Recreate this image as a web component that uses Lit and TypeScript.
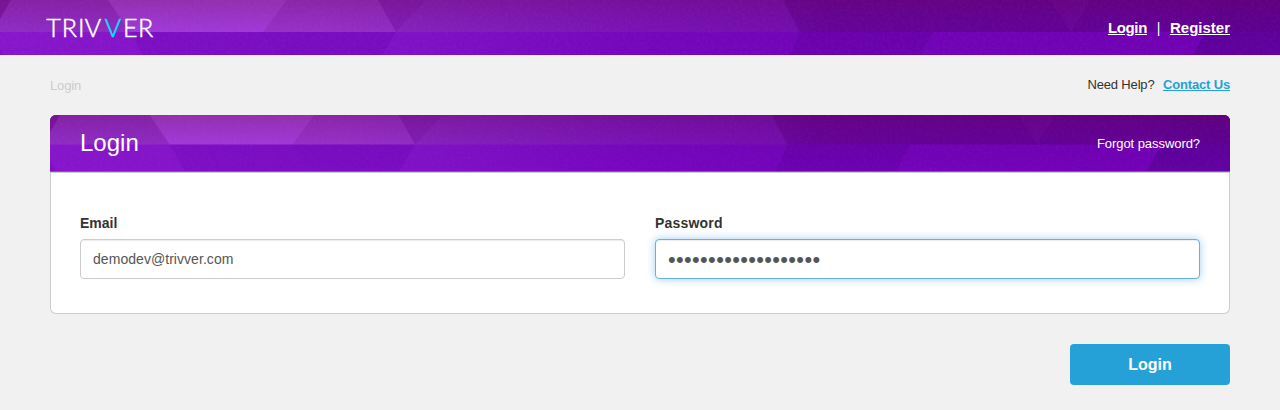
import { LitElement, html, css, svg } from "lit";
import { customElement } from "lit/decorators.js";

@customElement("geo-backdrop")
class GeoBackdrop extends LitElement {
  static styles = css`
    :host { position: absolute; inset: 0; overflow: hidden; display: block; border-radius: inherit; }
    svg { display: block; width: 100%; }
  `;
  render() {
    return html`<svg viewBox="0 0 1280 62" aria-hidden="true">
      <defs>
        <linearGradient id="up"><stop offset="0" stop-color="#8e2cc4"/><stop offset=".25" stop-color="#8c28c0"/><stop offset=".34" stop-color="#8220bc"/><stop offset=".5" stop-color="#7813b6"/><stop offset=".62" stop-color="#720eae"/><stop offset=".65" stop-color="#6e06a8"/><stop offset="1" stop-color="#6600a0"/></linearGradient>
        <linearGradient id="low"><stop offset="0" stop-color="#8917cc"/><stop offset=".32" stop-color="#8012c6"/><stop offset=".5" stop-color="#7606bc"/><stop offset=".62" stop-color="#7204b8"/><stop offset="1" stop-color="#7000b2"/></linearGradient>
        <linearGradient id="shade" x2="0" y2="1"><stop offset="0" stop-color="#680040" stop-opacity=".24"/><stop offset=".52" stop-color="#680060" stop-opacity="0"/><stop offset=".53" stop-color="#500090" stop-opacity=".03"/><stop offset="1" stop-color="#9000f0" stop-opacity=".12"/></linearGradient>
        <linearGradient id="glow" x2="0" y2="1"><stop offset="0" stop-color="#b450e0" stop-opacity=".5"/><stop offset="1" stop-color="#b048f0" stop-opacity=".5"/></linearGradient>
        <filter id="grain" x="0" y="0" width="100%" height="100%"><feTurbulence type="fractalNoise" baseFrequency=".35" numOctaves="2" seed="4"/><feColorMatrix values="0 0 0 0 1  0 0 0 0 .7  0 0 0 0 1  .5 0 0 0 -.19"/></filter>
      </defs>
      ${svg`
      <rect width="1280" height="62" fill="url(#low)"/>
      <rect width="1280" height="32" fill="url(#up)"/>
      <path d="M0 0H11L0 19Z" fill="#5c0080" opacity=".4"/>
      <path d="M108 0H287L263 32H130Z" fill="url(#glow)"/>
      <path d="M287 0H378L396 32H263Z" fill="#b048dc" opacity=".25"/>
      <path d="M378 0H426L396 32Z" fill="#60008c" opacity=".15"/>
      <path d="M130 32H263L281 62H147Z" fill="#6800b0" opacity=".26"/>
      <path d="M263 32H396L378 62H281Z" fill="#6800b0" opacity=".3"/>
      <path d="M0 49V62H7Z" fill="#6800b0" opacity=".3"/>
      <path d="M783 0H1280V32H800Z" fill="#580088" opacity=".45"/>
      <path d="M800 32H933L917 62H787Z" fill="#5c009a" opacity=".42"/>
      <path d="M1050 0H1091L1071 32Z" fill="#7c18a4" opacity=".22"/>
      <path d="M1206 32H1280V62H1189Z" fill="#4c0084" opacity=".5"/>
      <path d="M1219 0L1206 32H1280V0Z" fill="#4c0080" opacity=".12"/>
      `}
      <rect width="1280" height="62" fill="url(#shade)"/>
      <rect width="1280" height="62" filter="url(#grain)" opacity=".14"/>
    </svg>`;
  }
}

@customElement("app-root")
class AppRoot extends LitElement {
  static styles = css`
    :host { display: block; height: 410px; background: #f1f1f1; color: #333; font: 14px/20px "Liberation Sans", Arial, sans-serif; }
    * { box-sizing: border-box; }
    a { color: inherit; }
    header { position: relative; height: 55px; padding: 0 50px 0 46px; display: flex; justify-content: space-between; color: #fff; }
    .logo { position: relative; width: 116px; height: 44px; margin-top: 6px; font-family: Lato, sans-serif; font-weight: 300; font-size: 25px; fill: #fff; stroke: #fff; stroke-width: .5px; }
    .logo .accent { fill: #00e5ff; stroke: #00e5ff; }
    nav { position: relative; margin-top: 18px; display: flex; font-size: 15px; }
    nav a { font-weight: bold; }
    nav a:first-child { letter-spacing: -.35px; }
    .sep { width: 23px; text-align: center; font-size: 14px; }
    .sub { height: 60px; padding: 20px 50px 0; display: flex; justify-content: space-between; font-size: 13px; letter-spacing: -.16px; }
    .crumb { color: #ccc; padding-top: 1px; }
    .help a { color: #26a1d8; font-weight: bold; margin-left: 5px; }
    .card { margin: 0 50px; height: 199px; background: #fff; border-radius: 6px; border: solid #ccc; border-width: 0 1px 1px; }
    .head { position: relative; height: 57px; margin: 0 -1px; padding: 0 30px; display: flex; justify-content: space-between; align-items: center; color: #fff; border-radius: 6px 6px 0 0; border-bottom: 1px solid #a23be0; box-shadow: 0 1px #ccc; }
    h1 { position: relative; margin: 0; font-size: 24px; font-weight: normal; line-height: 30px; }
    .forgot { position: relative; margin-top: 2px; font-size: 13px; letter-spacing: -.06px; text-decoration: none; }
    form { padding: 41px 29px 0; display: grid; grid-template-columns: 1fr 1fr; gap: 30px; }
    label { font-weight: bold; display: block; letter-spacing: .2px; }
    label:first-child { letter-spacing: 0; }
    input { display: block; width: 100%; height: 40px; margin-top: 6px; padding: 6px 12px; border: 1px solid #ccc; border-radius: 4px; font: 14px "Liberation Sans", Arial, sans-serif; letter-spacing: .05px; color: #555; background: #fff; outline: none; box-shadow: inset 0 1px 1px rgba(0,0,0,.075); }
    .active { padding-top: 8px; border-color: #66afe9; font-size: 22px; letter-spacing: .32px; box-shadow: inset 0 1px 1px rgba(0,0,0,.075), 0 0 8px rgba(102,175,233,.6); }
    .actions { padding: 30px 50px 0; display: flex; justify-content: flex-end; }
    button { width: 160px; height: 41px; padding: 0; border: 0; border-radius: 4px; background: #26a1d8; color: #fff; font: bold 16px "Liberation Sans", Arial, sans-serif; }
  `;
  render() {
    return html`
      <header>
        <geo-backdrop></geo-backdrop>
        <svg class="logo" viewBox="0 0 116 44" role="img" aria-label="Trivver">
          <text y="31" x="0.3 15.8 32 38.8">TRIV</text>
          <text y="31" x="58.8" class="accent">V</text>
          <text y="31" x="77 92">ER</text>
        </svg>
        <nav><a href="#">Login</a><span class="sep">|</span><a href="#">Register</a></nav>
      </header>
      <div class="sub">
        <span class="crumb">Login</span>
        <span class="help">Need Help? <a href="#">Contact Us</a></span>
      </div>
      <section class="card">
        <div class="head">
          <geo-backdrop></geo-backdrop>
          <h1>Login</h1>
          <a class="forgot" href="#">Forgot password?</a>
        </div>
        <form>
          <label>Email<input type="text" .value=${"demodev@trivver.com"} /></label>
          <label>Password<input class="active" type="password" .value=${"x".repeat(19)} /></label>
        </form>
      </section>
      <div class="actions"><button type="button">Login</button></div>
    `;
  }
}
